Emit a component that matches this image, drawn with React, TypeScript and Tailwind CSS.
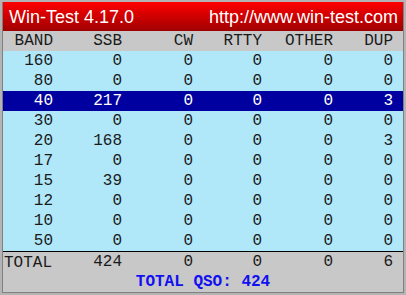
const rows: [string, string, string, string, string, string][] = [
  ["160", "0", "0", "0", "0", "0"],
  ["80", "0", "0", "0", "0", "0"],
  ["40", "217", "0", "0", "0", "3"],
  ["30", "0", "0", "0", "0", "0"],
  ["20", "168", "0", "0", "0", "3"],
  ["17", "0", "0", "0", "0", "0"],
  ["15", "39", "0", "0", "0", "0"],
  ["12", "0", "0", "0", "0", "0"],
  ["10", "0", "0", "0", "0", "0"],
  ["50", "0", "0", "0", "0", "0"],
];

const cols = "grid grid-cols-[50px_69px_71px_69px_71px_60px] h-[20px] items-center text-right";

export default function App() {
  return (
    <div className="w-[406px] h-[295px] bg-[#b4b4b4] p-[2px] font-['Liberation_Mono',monospace] text-[16px] leading-none">
      <div className="h-full flex flex-col border border-[#808080] border-t-0">
        <div className="h-[30px] flex items-center justify-between pl-[6px] pr-[5px] bg-gradient-to-b from-[#ff0000] to-[#a00000] text-white font-['Liberation_Sans',Arial,sans-serif] text-[18px]">
          <span>Win-Test 4.17.0</span>
          <span>http://www.win-test.com</span>
        </div>
        <div className={`${cols} bg-[#c8c8c8] text-[#1a1a1a]`}>
          <span>BAND</span>
          <span>SSB</span>
          <span>CW</span>
          <span>RTTY</span>
          <span>OTHER</span>
          <span>DUP</span>
        </div>
        <div className="bg-[#b0e8fa] text-[#1a1a1a]">
          {rows.map((r) => (
            <div
              key={r[0]}
              className={`${cols} ${r[0] === "40" ? "bg-[#0000a0] text-white" : ""}`}
            >
              {r.map((v, i) => (
                <span key={i}>{v}</span>
              ))}
            </div>
          ))}
        </div>
        <div className="flex-1 bg-[#c8c8c8] border-t border-black text-[#1a1a1a]">
          <div className={`${cols} relative`}>
            <span className="absolute left-[1px] top-[3px]">TOTAL</span>
            <span></span>
            <span>424</span>
            <span>0</span>
            <span>0</span>
            <span>0</span>
            <span>6</span>
          </div>
          <div className="h-[20px] flex items-center justify-center font-bold text-[#1010f0]">
            TOTAL QSO: 424
          </div>
        </div>
      </div>
    </div>
  );
}
